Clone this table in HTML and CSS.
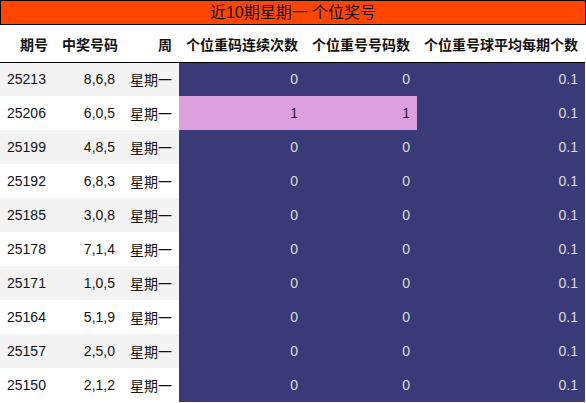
FILE: index.html
```html
<!DOCTYPE html>
<html lang="zh">
<head>
<meta charset="utf-8">
<link rel="stylesheet" href="styles.css">
</head>
<body>
<div class="wrap">
  <div class="title">近10期星期一 个位奖号</div>
  <table class="grid">
    <thead>
      <tr>
        <th class="c1">期号</th>
        <th class="c2">中奖号码</th>
        <th class="c3">周</th>
        <th class="c4">个位重码连续次数</th>
        <th class="c5">个位重号号码数</th>
        <th class="c6">个位重号球平均每期个数</th>
      </tr>
    </thead>
    <tbody>
      <tr><td class="c1">25213</td><td class="c2">8,6,8</td><td class="c3">星期一</td><td class="c4 dark">0</td><td class="c5 dark">0</td><td class="c6 dark">0.1</td></tr>
      <tr><td class="c1">25206</td><td class="c2">6,0,5</td><td class="c3">星期一</td><td class="c4 pink">1</td><td class="c5 pink">1</td><td class="c6 dark">0.1</td></tr>
      <tr><td class="c1">25199</td><td class="c2">4,8,5</td><td class="c3">星期一</td><td class="c4 dark">0</td><td class="c5 dark">0</td><td class="c6 dark">0.1</td></tr>
      <tr><td class="c1">25192</td><td class="c2">6,8,3</td><td class="c3">星期一</td><td class="c4 dark">0</td><td class="c5 dark">0</td><td class="c6 dark">0.1</td></tr>
      <tr><td class="c1">25185</td><td class="c2">3,0,8</td><td class="c3">星期一</td><td class="c4 dark">0</td><td class="c5 dark">0</td><td class="c6 dark">0.1</td></tr>
      <tr><td class="c1">25178</td><td class="c2">7,1,4</td><td class="c3">星期一</td><td class="c4 dark">0</td><td class="c5 dark">0</td><td class="c6 dark">0.1</td></tr>
      <tr><td class="c1">25171</td><td class="c2">1,0,5</td><td class="c3">星期一</td><td class="c4 dark">0</td><td class="c5 dark">0</td><td class="c6 dark">0.1</td></tr>
      <tr><td class="c1">25164</td><td class="c2">5,1,9</td><td class="c3">星期一</td><td class="c4 dark">0</td><td class="c5 dark">0</td><td class="c6 dark">0.1</td></tr>
      <tr><td class="c1">25157</td><td class="c2">2,5,0</td><td class="c3">星期一</td><td class="c4 dark">0</td><td class="c5 dark">0</td><td class="c6 dark">0.1</td></tr>
      <tr><td class="c1">25150</td><td class="c2">2,1,2</td><td class="c3">星期一</td><td class="c4 dark">0</td><td class="c5 dark">0</td><td class="c6 dark">0.1</td></tr>
    </tbody>
  </table>
</div>
</body>
</html>
```
FILE: styles.css
```css
* { box-sizing: border-box; }
html, body {
  margin: 0;
  padding: 0;
  background: #ffffff;
}
body {
  font-family: "Liberation Sans", "Noto Sans CJK SC", sans-serif;
  font-size: 14px;
  color: #111;
}
.wrap {
  width: 586px;
}
.title {
  width: 586px;
  height: 25px;
  border: 1px solid #000;
  background: #ff4500;
  color: #111;
  font-size: 16px;
  line-height: 23px;
  text-align: center;
}
.grid {
  width: 585px;
  border-collapse: collapse;
  table-layout: fixed;
}
.grid th,
.grid td {
  padding: 0 7px 0 7px;
  white-space: nowrap;
  text-align: right;
}
.grid th {
  height: 37px;
  font-weight: bold;
  border-bottom: 1px solid #000;
  vertical-align: middle;
  padding-top: 1px;
}
.grid td {
  height: 34px;
  vertical-align: middle;
}
.grid tbody tr:nth-child(odd) td {
  background: #f3f3f3;
}
.grid td.c1 {
  text-align: left;
}
.c1 { width: 55px; }
.c2 { width: 67px; }
.c3 { width: 57px; }
.c4 { width: 126px; }
.c5 { width: 112px; }
.c6 { width: 168px; }
.grid tbody tr td.dark {
  background: #3a3a78;
  color: #dcdcdc;
}
.grid tbody tr td.pink {
  background: #dda0dd;
  color: #222;
}
```
